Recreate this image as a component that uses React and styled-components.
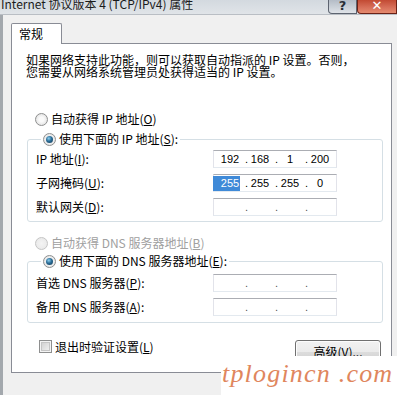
import React from 'react';
import styled, { createGlobalStyle } from 'styled-components';

const GlobalStyle = createGlobalStyle`
  html, body {
    margin: 0;
    padding: 0;
    background: #f0f0f0;
  }
  body {
    font-family: "Noto Sans CJK SC", "Noto Sans", sans-serif;
    font-size: 12px;
    color: #000;
  }
`;

const CJK = `"Noto Sans CJK SC", "Noto Sans", sans-serif`;

const Window = styled.div`
  position: relative;
  width: 397px;
  height: 395px;
  overflow: hidden;
  background: #f0f0f0;
`;

const TitleBar = styled.div`
  display: flex;
  justify-content: space-between;
  align-items: flex-start;
  height: 15px;
  background: linear-gradient(#d3d9df, #e0e4e8);
  border-bottom: 1px solid #b9bec4;
  box-sizing: border-box;
`;

const TitleText = styled.div`
  margin-top: -2px;
  padding-left: 1px;
  font-family: ${CJK};
  font-size: 12px;
  line-height: 12px;
  color: #1b1b1b;
  white-space: nowrap;
`;

const Controls = styled.div`
  display: flex;
  height: 14px;
`;

const CtrlButton = styled.div`
  width: ${p => p.$w}px;
  height: 14px;
  box-sizing: border-box;
  border: 1px solid ${p => (p.$close ? '#6b2116' : '#5d6470')};
  border-top: none;
  border-radius: 0 0 0 4px;
  background: ${p =>
    p.$close
      ? 'linear-gradient(#c24a33, #d8715b 60%, #e58a6e)'
      : 'linear-gradient(#b4bcc6, #cdd3da 60%, #dfe3e8)'};
  display: flex;
  justify-content: center;
  align-items: flex-end;
  overflow: hidden;
  color: ${p => (p.$close ? '#fff' : '#2a2f36')};
  font-family: "DejaVu Sans", sans-serif;
  font-weight: bold;
  font-size: 13px;
  line-height: 13px;
  & > span {
    margin-bottom: 1px;
  }
`;

const Body = styled.div`
  display: flex;
  flex-direction: column;
  height: 380px;
  box-sizing: border-box;
  padding: 8px 0 0 8px;
  border-left: 3px solid #a3a8ad;
`;

const Tab = styled.div`
  position: relative;
  z-index: 1;
  align-self: flex-start;
  width: 51px;
  height: 21px;
  box-sizing: border-box;
  padding: 2px 0 0 7px;
  background: #fff;
  border: 1px solid #898c95;
  border-bottom: none;
  border-radius: 2px 2px 0 0;
  font-family: ${CJK};
  font-size: 12px;
  line-height: 16px;
`;

const Panel = styled.div`
  margin-top: -1px;
  width: 381px;
  height: 330px;
  box-sizing: border-box;
  padding: 10px 0 0 14px;
  background: #fff;
  border: 1px solid #898c95;
  display: flex;
  flex-direction: column;
`;

const Intro = styled.p`
  margin: 0;
  font-family: ${CJK};
  font-size: 12px;
  line-height: 12px;
  white-space: nowrap;
`;

const OptionRow = styled.label`
  display: flex;
  align-items: center;
  gap: 3px;
  height: 16px;
  margin-top: ${p => p.$top}px;
  margin-left: 9px;
  font-family: ${CJK};
  font-size: 12px;
  line-height: 16px;
  color: ${p => (p.$disabled ? '#a0a0a0' : '#000')};
  white-space: nowrap;
`;

const Radio = styled.span`
  position: relative;
  flex: none;
  width: 13px;
  height: 13px;
  box-sizing: border-box;
  border-radius: 50%;
  border: 1px solid ${p => (p.$disabled ? '#c5c5c5' : '#8e8f8f')};
  background: ${p =>
    p.$disabled
      ? 'radial-gradient(circle at 50% 50%, #f4f4f4, #e6e6e6)'
      : 'radial-gradient(circle at 50% 50%, #fafafa 30%, #d8d8d8 100%)'};
  &::after {
    content: '';
    display: ${p => (p.$checked ? 'block' : 'none')};
    position: absolute;
    left: 2px;
    top: 2px;
    width: 7px;
    height: 7px;
    border-radius: 50%;
    background: radial-gradient(circle at 40% 35%, #8ed0f0 0%, #2a6c96 45%, #103550 100%);
  }
`;

const Group = styled.fieldset`
  margin: ${p => p.$top}px 0 0 1px;
  width: 356px;
  box-sizing: border-box;
  padding: ${p => p.$padTop}px 0 ${p => p.$padBottom}px 8px;
  border: 1px solid #d5dfe5;
  border-radius: 3px;
`;

const Legend = styled.legend`
  display: flex;
  align-items: center;
  gap: 3px;
  height: 16px;
  margin-left: 5px;
  padding: 0 2px;
  font-family: ${CJK};
  font-size: 12px;
  line-height: 16px;
  white-space: nowrap;
`;

const FieldGrid = styled.div`
  display: grid;
  grid-template-columns: 177px 124px;
  grid-auto-rows: 18px;
  row-gap: 6px;
  align-items: center;
`;

const FieldLabel = styled.span`
  font-family: ${CJK};
  font-size: 12px;
  line-height: 18px;
  white-space: nowrap;
`;

const IpBox = styled.div`
  display: flex;
  align-items: center;
  height: 18px;
  box-sizing: border-box;
  padding-left: 6px;
  background: #fff;
  border: 1px solid #e2e3ea;
  border-top-color: #abadb3;
  border-bottom-color: #e3e9ef;
  font-family: "Liberation Sans", Arial, sans-serif;
  font-size: 11px;
  line-height: 14px;
`;

const Octet = styled.span`
  width: 20px;
  text-align: center;
  height: 15px;
  line-height: 15px;
  margin-left: ${p => (p.$selected ? '-7px' : '0')};
  padding-left: ${p => (p.$selected ? '7px' : '0')};
  background: ${p => (p.$selected ? '#3f8ad8' : 'transparent')};
  color: ${p => (p.$selected ? '#fff' : '#000')};
`;

const Dot = styled.span`
  width: 10px;
  text-align: center;
  padding-left: 3px;
  box-sizing: border-box;
  color: ${p => (p.$faint ? '#555' : '#000')};
`;

const Footer = styled.div`
  display: flex;
  justify-content: space-between;
  align-items: flex-start;
  margin: 17px 10px 0 13px;
`;

const CheckRow = styled.label`
  display: flex;
  align-items: center;
  gap: 3px;
  height: 13px;
  font-family: ${CJK};
  font-size: 12px;
  line-height: 13px;
  white-space: nowrap;
`;

const CheckBox = styled.span`
  flex: none;
  width: 13px;
  height: 13px;
  box-sizing: border-box;
  border: 1px solid #8e8f8f;
  box-shadow: inset 0 0 0 1px #f4f4f4, inset 0 0 0 2px #c5c5c5;
  background-image: linear-gradient(135deg, #cbcbcb, #f7f7f7);
`;

const Button = styled.button`
  width: 86px;
  height: 23px;
  padding: 0;
  border: 1px solid #707070;
  border-radius: 3px;
  background: linear-gradient(#f2f2f2 0%, #ebebeb 50%, #dddddd 51%, #cfcfcf 100%);
  box-shadow: inset 0 0 0 1px #fcfcfc;
  font-family: ${CJK};
  font-size: 12px;
  line-height: 19px;
  color: #000;
`;

const Watermark = styled.div`
  position: absolute;
  left: 221px;
  top: 356px;
  right: 0;
  bottom: 0;
  padding-left: 1px;
  background: #fff;
  font-family: "Liberation Serif", "Times New Roman", serif;
  font-style: italic;
  font-size: 26px;
  line-height: 36px;
  letter-spacing: 1.2px;
  color: #e0865d;
  white-space: nowrap;
`;

const IpField = ({ octets, selectFirst }) => {
  const values = octets || ['', '', '', ''];
  return (
    <IpBox>
      {values.map((v, i) => (
        <React.Fragment key={i}>
          <Octet $selected={selectFirst && i === 0}>{v}</Octet>
          {i < 3 && <Dot $faint={!octets}>.</Dot>}
        </React.Fragment>
      ))}
    </IpBox>
  );
};

const Key = ({ children }) => <u>{children}</u>;

export default function App() {
  return (
    <>
      <GlobalStyle />
      <Window>
        <TitleBar>
          <TitleText>Internet 协议版本 4 (TCP/IPv4) 属性</TitleText>
          <Controls>
            <CtrlButton $w={29}><span>?</span></CtrlButton>
            <CtrlButton $w={40} $close><span>✕</span></CtrlButton>
          </Controls>
        </TitleBar>
        <Body>
          <Tab>常规</Tab>
          <Panel>
            <Intro>
              如果网络支持此功能，则可以获取自动指派的 IP 设置。否则，<br />
              您需要从网络系统管理员处获得适当的 IP 设置。
            </Intro>

            <OptionRow $top={33}>
              <Radio />
              <span>自动获得 IP 地址(<Key>O</Key>)</span>
            </OptionRow>
            <Group $top={4} $padTop={3} $padBottom={5}>
              <Legend>
                <Radio $checked />
                <span>使用下面的 IP 地址(<Key>S</Key>):</span>
              </Legend>
              <FieldGrid>
                <FieldLabel>IP 地址(<Key>I</Key>):</FieldLabel>
                <IpField octets={['192', '168', '1', '200']} />
                <FieldLabel>子网掩码(<Key>U</Key>):</FieldLabel>
                <IpField octets={['255', '255', '255', '0']} selectFirst />
                <FieldLabel>默认网关(<Key>D</Key>):</FieldLabel>
                <IpField />
              </FieldGrid>
            </Group>

            <OptionRow $top={13} $disabled>
              <Radio $disabled />
              <span>自动获得 DNS 服务器地址(<Key>B</Key>)</span>
            </OptionRow>
            <Group $top={2} $padTop={5} $padBottom={6}>
              <Legend>
                <Radio $checked />
                <span>使用下面的 DNS 服务器地址(<Key>E</Key>):</span>
              </Legend>
              <FieldGrid>
                <FieldLabel>首选 DNS 服务器(<Key>P</Key>):</FieldLabel>
                <IpField />
                <FieldLabel>备用 DNS 服务器(<Key>A</Key>):</FieldLabel>
                <IpField />
              </FieldGrid>
            </Group>

            <Footer>
              <CheckRow>
                <CheckBox />
                <span>退出时验证设置(<Key>L</Key>)</span>
              </CheckRow>
              <Button>高级(<Key>V</Key>)...</Button>
            </Footer>
          </Panel>
        </Body>
        <Watermark>tplogincn .com</Watermark>
      </Window>
    </>
  );
}
